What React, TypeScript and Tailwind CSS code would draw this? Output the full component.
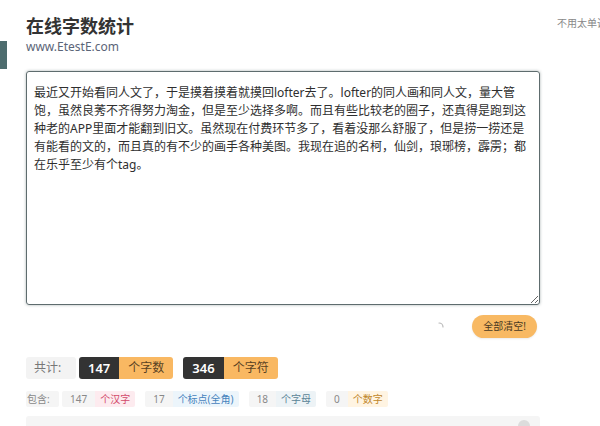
import { useState } from "react";

const SAMPLE = [
  "最近又开始看同人文了，于是摸着摸着就摸回lofter去了。lofter的同人画和同人文，量大管",
  "饱，虽然良莠不齐得努力淘金，但是至少选择多啊。而且有些比较老的圈子，还真得是跑到这",
  "种老的APP里面才能翻到旧文。虽然现在付费环节多了，看着没那么舒服了，但是捞一捞还是",
  "有能看的文的，而且真的有不少的画手各种美图。我现在追的名柯，仙剑，琅琊榜，霹雳；都",
  "在乐乎至少有个tag。",
].join("\n");

type Part = { num: number; label: string; tone: string };

const parts: Part[] = [
  { num: 147, label: "个汉字", tone: "bg-[#fdebef] text-[#d2496a]" },
  { num: 17, label: "个标点(全角)", tone: "bg-[#ecf5fb] text-[#4683bd]" },
  { num: 18, label: "个字母", tone: "bg-[#edf3f6] text-[#5a8496]" },
  { num: 0, label: "个数字", tone: "bg-[#fff4e2] text-[#c0862a]" },
];

export default function App() {
  const [text, setText] = useState(SAMPLE);

  return (
    <div className="relative w-[600px] h-[426px] overflow-hidden bg-white font-['Noto_Sans','Noto_Sans_CJK_SC',sans-serif] text-[#333]">
      {/* side tab */}
      <div className="absolute left-0 top-[41px] w-[7px] h-[28px] bg-[#4d6c6e]" />

      <div className="flex pl-[26px]">
        <div className="w-[514px] shrink-0">
          <h1 className="pt-[14px] text-[18px] leading-[24px] font-bold text-[#333]">
            在线字数统计
          </h1>
          <div className="pt-[1px] text-[12px] leading-[16px] text-[#5b6578]">www.EtestE.com</div>

          <textarea
            value={text}
            onChange={(e) => setText(e.target.value)}
            spellCheck={false}
            className="mt-[16px] block w-[514px] h-[234px] rounded-[3px] border border-[#5e6c6e] px-[7px] pt-[12px] text-[12px] leading-[18px] text-[#2e2e2e] outline-none shadow-[0_0_3px_rgba(60,80,80,0.45)] whitespace-pre overflow-hidden"
          />

          <div className="mt-[10px] flex items-center justify-end pr-[3px]">
            <svg className="w-[10px] h-[10px] mr-[28px]" viewBox="0 0 10 10">
              <path d="M5 1 A4 4 0 0 1 9 5" fill="none" stroke="#b9b9b9" strokeWidth="1.2" strokeLinecap="round" />
            </svg>
            <button
              type="button"
              onClick={() => setText("")}
              className="h-[23px] w-[65px] rounded-full bg-[#f8b963] text-[10px] text-[#4a3a22] shadow-[0_1px_2px_rgba(0,0,0,0.08)]"
            >
              全部清空!
            </button>
          </div>

          <div className="mt-[19px] flex items-center h-[22px] leading-[22px]">
            <span className="w-[50px] h-full bg-[#f3f3f3] text-[12px] text-[#777] pl-[8px] rounded-[3px]">共计:</span>
            <span className="ml-[3px] h-full bg-[#333] text-white font-semibold text-[13px] px-[9px] rounded-l-[3px]">147</span>
            <span className="h-full bg-[#f9b862] text-[12px] text-[#5a4222] px-[9px] rounded-r-[3px]">个字数</span>
            <span className="ml-[10px] h-full bg-[#333] text-white font-semibold text-[13px] px-[9px] rounded-l-[3px]">346</span>
            <span className="h-full bg-[#f9b862] text-[12px] text-[#5a4222] px-[9px] rounded-r-[3px]">个字符</span>
          </div>

          <div className="mt-[12px] flex items-center h-[16px] leading-[16px] text-[10px]">
            <span className="w-[33px] h-full bg-[#f5f5f5] text-[#888] pl-[1px] rounded-[2px]">包含:</span>
            {parts.map((p, i) => (
              <div key={p.label} className={i === 0 ? "flex h-full ml-[3px]" : "flex h-full ml-[10px]"}>
                <span className="h-full bg-[#f5f5f5] text-[#888] px-[8px] rounded-l-[2px]">{p.num}</span>
                <span className={"h-full px-[5px] rounded-r-[2px] " + p.tone}>{p.label}</span>
              </div>
            ))}
          </div>

          <div className="mt-[9px] h-[40px] rounded-[3px] bg-[#f5f5f5] flex justify-end pr-[10px] pt-[4px]">
            <span className="w-[12px] h-[12px] rounded-full bg-[#dcdcdc]" />
          </div>
        </div>

        <div className="ml-[17px] pt-[16px] whitespace-nowrap text-[10px] text-[#888]">
          不用太单调的颜色
        </div>
      </div>
    </div>
  );
}
